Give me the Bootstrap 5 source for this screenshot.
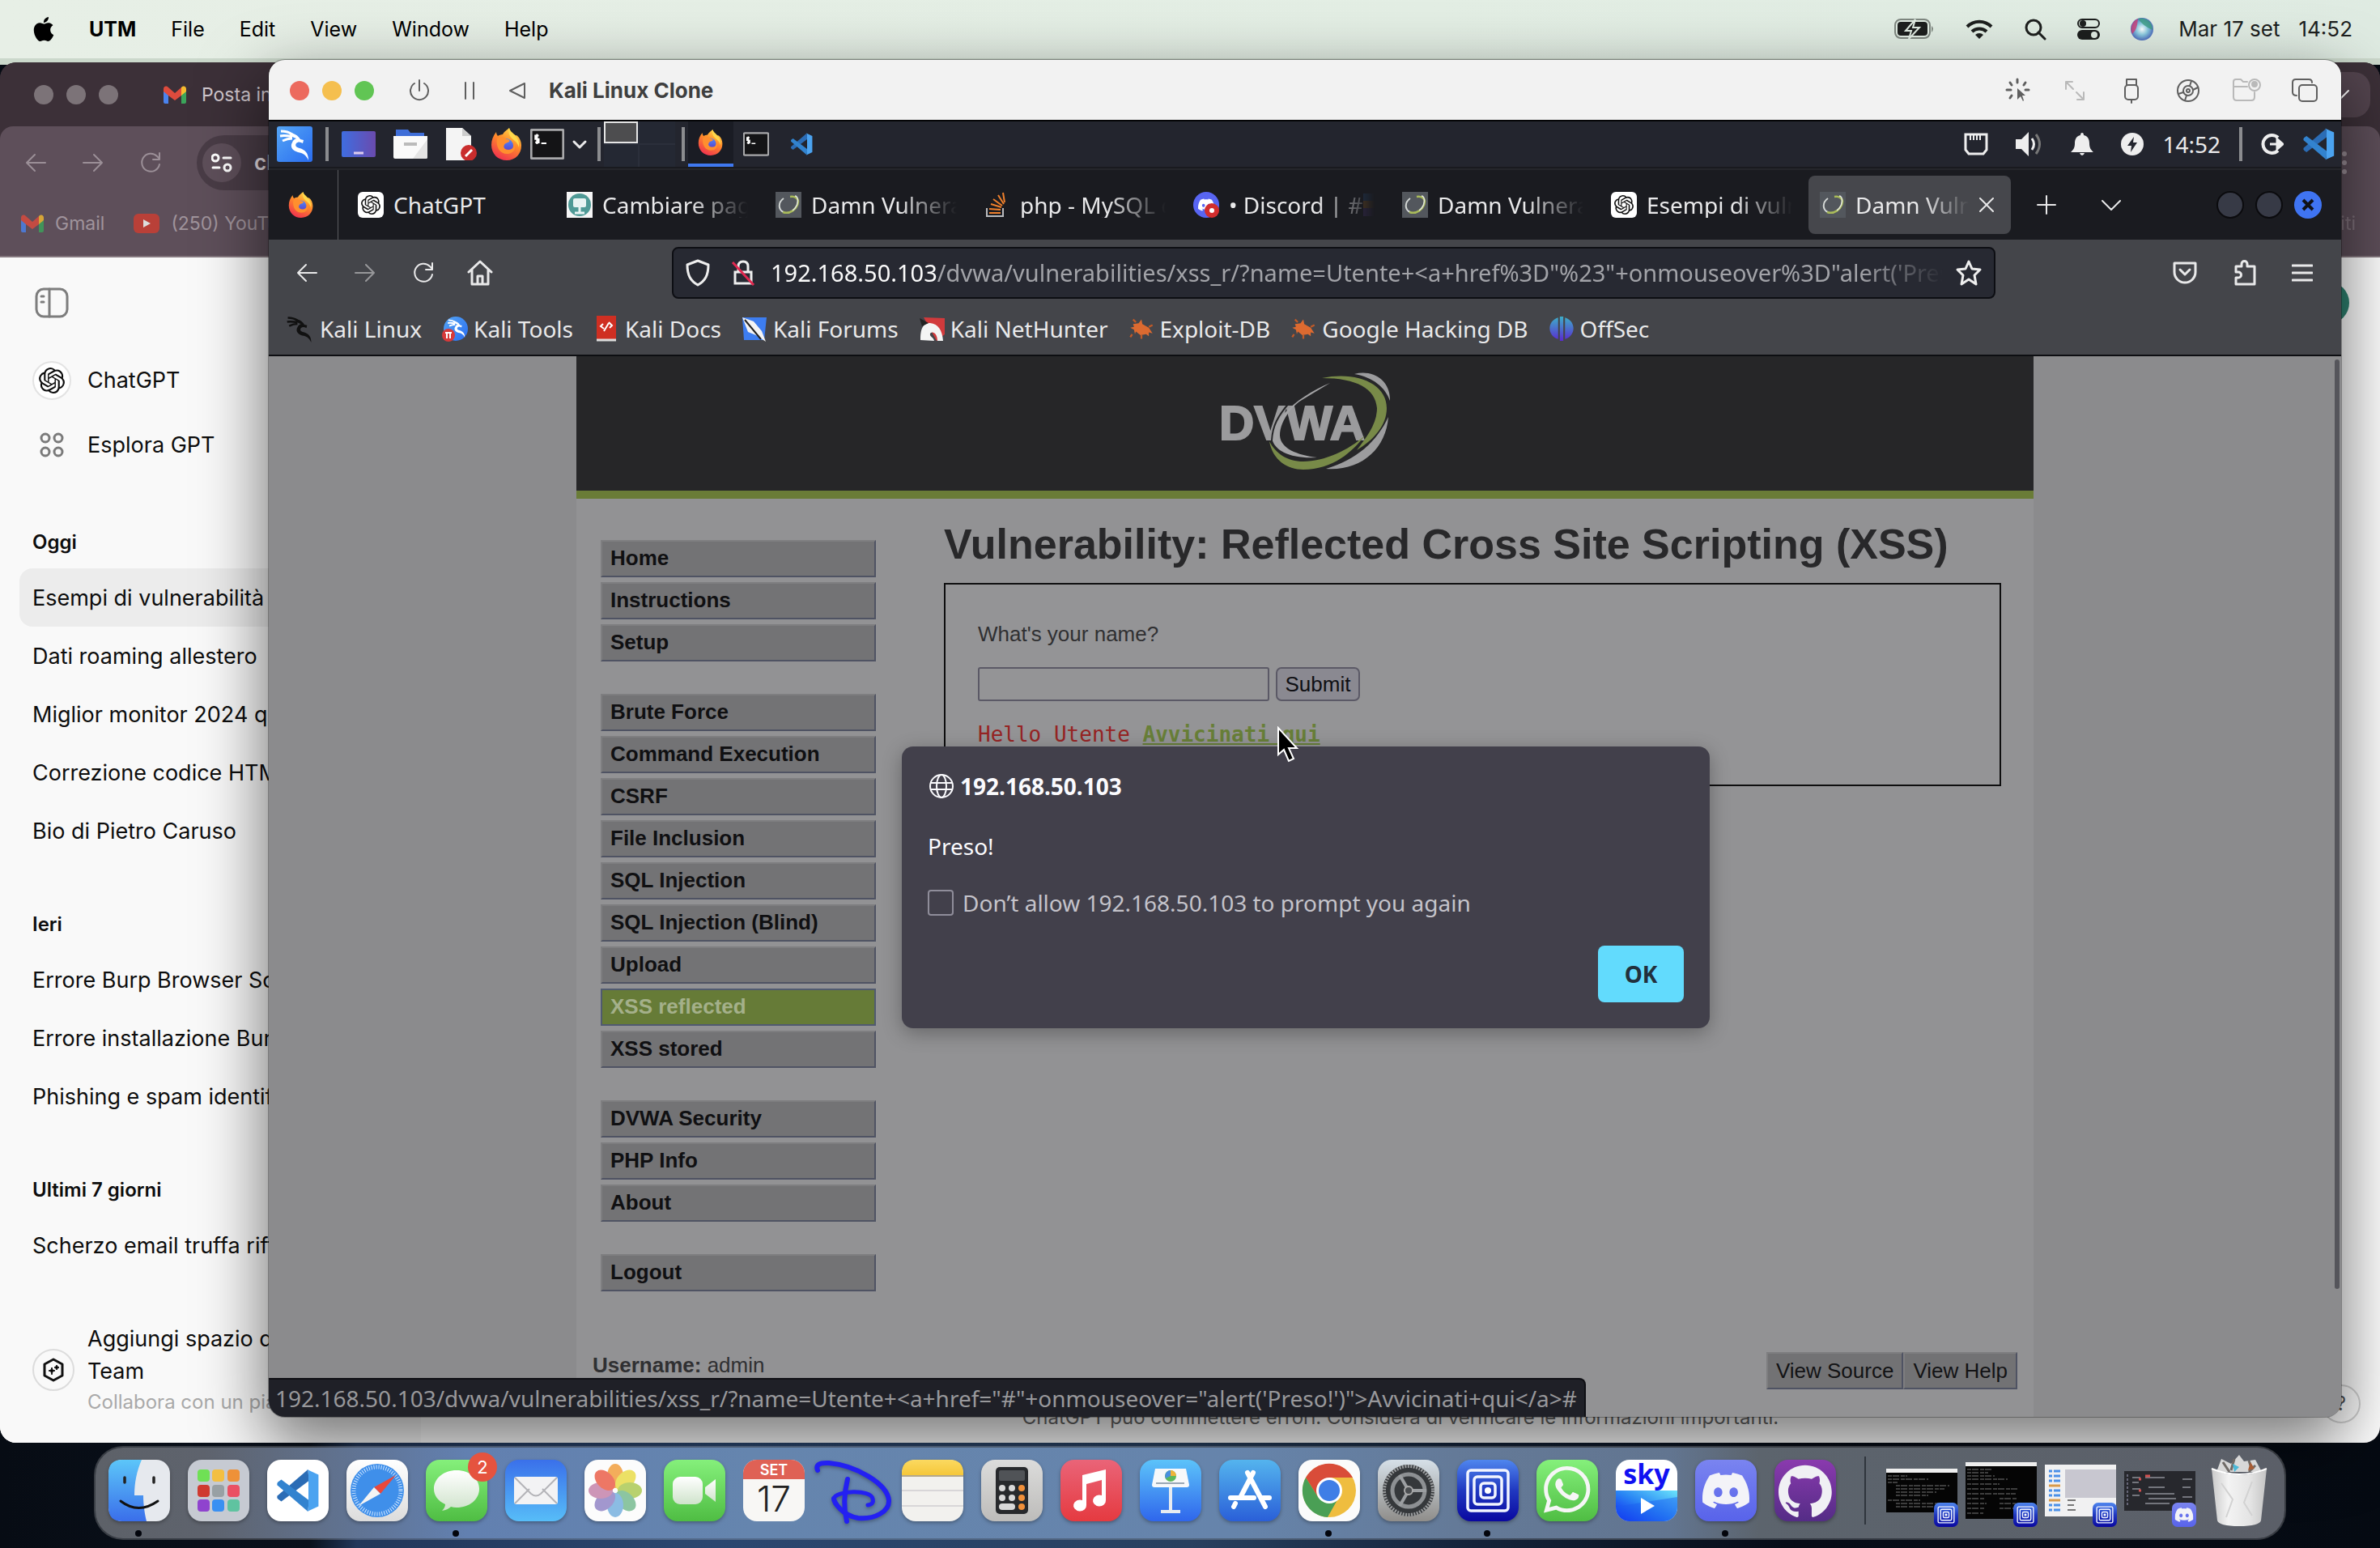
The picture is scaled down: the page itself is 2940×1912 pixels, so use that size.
<!DOCTYPE html>
<html lang="it">
<head>
<meta charset="utf-8">
<meta name="viewport" content="width=device-width, initial-scale=1">
<title>Kali Linux Clone</title>
<link href="https://cdn.jsdelivr.net/npm/bootstrap@5.3.0/dist/css/bootstrap.min.css" rel="stylesheet">
<style>
html,body{height:100%}
body{margin:0;overflow:hidden;font-family:Inter,"Open Sans",sans-serif;font-size:26px;line-height:32px;color:#0d0d0d;
 background:linear-gradient(90deg,#070c14 0,#0a111c 13%,#22375a 15%,#2b4770 30%,#28405f 50%,#14233a 62%,#070d18 75%,#050a12 100%)}
a{color:inherit;text-decoration:none}
button{border:0;background:none;padding:0;color:inherit;line-height:inherit}
svg{display:block;flex:none}
.sprite{position:absolute;width:0;height:0}
.ln{fill:none;stroke:currentColor;stroke-width:2;stroke-linecap:round;stroke-linejoin:round}
.thick{stroke-width:3}
.nowrap{white-space:nowrap}
.i28{width:28px;height:28px}.i32{width:32px;height:32px}.i40{width:40px;height:40px}.i24{width:24px;height:24px}
.dot24{width:24px;height:24px;border-radius:50%}

/* system bar */
.sysbar{height:72px;background:linear-gradient(90deg,#e7efe6,#e3eee4 60%,#dfebe2);color:#000;padding:0 34px 0 41px;font-size:25px}
.sysstrip{height:8px;background:#cbd8cb}
.sysbar nav{gap:43px}
.systray{gap:38px;color:#1d1f1e}
.sysend{gap:31px}
.sysclock{gap:23px;font-size:26px}

/* rear browser window */
.rear{position:absolute;top:77px;left:0;right:0;bottom:130px;border-radius:20px;overflow:hidden;background:#3c3038}
.rear-tabs{height:79px;background:#3c3038;padding:0 12px 0 42px;color:#cfc6cc;font-size:23px}
.rear-tabs .dot24{background:#7c7378}
.rear-tab{gap:19px;margin-left:56px}
.rear-search{width:72px;height:56px;border-radius:20px;background:#54454f}
.rear-bars{background:#5e4f5a;height:162px;border-bottom:2px solid #85787f;border-radius:16px 16px 0 0}
.rear-nav{height:90px;padding:0 40px 0 30px;color:#9b8f97}
.rear-nav .step{width:71px}
.rear-pill{height:68px;width:500px;border-radius:34px;background:#493c46;padding-left:7px;color:#e3dce1;font-weight:600}
.rear-pill span{width:48px;height:48px;border-radius:50%;background:#5e4f5a;color:#fff}
.rear-marks{height:60px;padding:0 30px 0 26px;gap:36px;color:#a0949c;font-size:23px}
.rear-marks a{display:flex;align-items:center;gap:14px;white-space:nowrap}
.rear-page{background:#fff}
.side{width:520px;background:#f9f9f9;color:#0d0d0d}
.side-top{height:112px;padding-left:43px;color:#7d7d7d}
.side-app{height:80px;padding-left:40px;gap:20px;font-size:27px}
.gpt-ring{width:48px;height:48px;border:2px solid #e3e3e3;border-radius:50%;background:#fff}
.side h2{font-size:24px;font-weight:600;line-height:56px;margin:52px 0 4px 40px}
.side-item{height:72px;margin:0 24px;padding:0 16px;border-radius:16px;line-height:73px;font-size:27px;overflow:hidden}
.side-item.current{background:#ececec}
.side-team{padding:0 0 32px 40px;gap:16px;font-size:27px;line-height:40px}
.side-team small{display:block;font-size:24px;line-height:36px;color:#a9a9a9}
.team-ring{width:52px;height:52px;border:2px solid #dcdcdc;border-radius:50%}
.rear-note{font-size:24px;line-height:30px;color:#676767;padding-bottom:16px}
.rear-help{position:absolute;right:24px;bottom:24px;width:48px;height:48px;border:2px solid #d4d4d4;border-radius:50%;font-size:24px;color:#555}
.rear-face{position:absolute;right:38px;top:30px;width:52px;height:52px;border-radius:50%;background:#2f8472}

/* virtual machine window */
.vm{position:absolute;top:74px;left:332px;right:48px;bottom:162px;border-radius:20px;overflow:hidden;background:#8b8b8d;
 box-shadow:0 0 0 1px rgba(0,0,0,.3),0 30px 80px 6px rgba(0,0,0,.52)}
.vm-title{height:76px;background:#f2f2f2;border-bottom:2px solid #050507;padding:2px 29px 0 26px;color:#5f5f5f}
.vm-title h1{font-size:26px;font-weight:700;margin:0;color:#3f3f3f;line-height:32px}
.vm-run{gap:41px;margin:0 28px 0 42px}
.vm-tools{gap:38px}
.linux{font-family:"Noto Sans","Open Sans",sans-serif;font-size:28px;color:#e9e9ea}
.panelbar{height:58px;background:#23252e;padding:0 8px 0 10px;border-bottom:2px solid #191a1f}
.psep{width:4px;height:42px;background:#8b8c8f;flex:none}
.spaces{width:88px;height:56px;background:#2b2f3b;display:grid;grid-template-columns:42px 1fr;grid-template-rows:27px 1fr;gap:2px}
.spaces i{background:#242833}
.spaces i:first-child{background:#4d4d4f;border:2px solid #e5e5e5}
.task{width:56px;height:56px}
.task.on{background:#1a1c24;border-bottom:4px solid #3f78f0}
.tabrow{height:88px;background:#1a1b20;border-top:2px solid #25262b}
.pinned{width:86px;border-right:1px solid #5a5b5f}
.tabs-list{padding-left:10px}
.ftab{width:258px;height:72px;padding:0 20px 0 14px;gap:12px;border-radius:8px;overflow:hidden;flex:none}
.ftab span{overflow:hidden;white-space:nowrap;flex:1;-webkit-mask-image:linear-gradient(90deg,#000 60%,transparent);mask-image:linear-gradient(90deg,#000 60%,transparent)}
.ftab.full span{-webkit-mask-image:none;mask-image:none}
.ftab.on{background:#46474c;width:250px}
.wbtn{width:34px;height:34px;border-radius:50%;background:#373a46;border:2px solid #0b0b0e}
.wbtn.x{background:#3f74f2;border-color:#3f74f2;color:#101218}
.navrow{height:82px;background:#44454a;padding:0 35px 0 29px}
.navrow .nb{width:72px}
.urlgap{width:181px}
.urlbox{width:1635px;height:64px;background:#272932;border:2px solid #0d0e13;border-radius:8px;padding:0 14px;color:#a2a3a8;font-size:29px}
.urltext{flex:1;overflow:hidden;white-space:nowrap;-webkit-mask-image:linear-gradient(90deg,#000 92%,transparent 99%);mask-image:linear-gradient(90deg,#000 92%,transparent 99%)}
.urltext b{font-weight:400;color:#fbfbfb}
.markrow{height:62px;background:#44454a;border-bottom:2px solid #0d0e12;padding:0 20px 4px;gap:25px}
.markrow a{display:flex;align-items:center;gap:7px;white-space:nowrap}
.view{height:1310px;position:relative;font-family:"Liberation Sans",Arial,sans-serif;font-size:26px;color:#303032;background:#8b8b8d}
.dv{width:1800px;max-width:100%;background:#929294}
.dv-head{height:176px;background:#262628;border-bottom:10px solid #6a7c37;padding-top:20px}
.dv-menu{width:340px;margin:51px 0 0 30px}
.dv-menu ul{list-style:none;padding:0;margin:0 0 40px}
.dv-menu a{display:block;height:46px;line-height:40px;margin-bottom:6px;padding-left:10px;font-weight:700;color:#101012;background:#737375;border:2px solid;border-color:#7e7e80 #4f5363 #4f5363 #7e7e80}
.dv-menu li:last-child a{margin-bottom:0}
.dv-menu a.sel{background:#667b37;color:#a4b08a;border-color:#505a70}
.dv-main{margin:26px 40px 0 84px;flex:1}
.dv-main h1{font-size:52px;font-weight:700;line-height:60px;margin:0 0 18px;color:#28282a;white-space:nowrap}
.dv-box{height:251px;border:2px solid #0e0e0f;padding:45px 40px 0;background:#949496}
.dv-box label{display:block;line-height:32px}
.dv-row{margin-top:25px}
.dv-input{width:360px;height:42px;border:2px solid #5b5966;border-radius:3px;background:#949496;outline:0}
.dv-submit{height:42px;width:104px;border:2px solid #5b5966;border-radius:7px;background:#8a8991;color:#101014;line-height:36px}
.dv-hello{font-family:"DejaVu Sans Mono",monospace;color:#962424;line-height:32px;margin:25px 0 0}
.dv-hello a{font-weight:700;color:#687f38;text-decoration:underline;text-decoration-thickness:2px;text-underline-offset:2px;text-decoration-skip-ink:none}
.dv-foot{padding:0 20px;margin-top:35px}
.dv-foot button{height:46px;padding:0 10px;background:#727274;color:#131315;border:2px solid;border-color:#7e7e80 #4f5363 #4f5363 #7e7e80;line-height:42px}
.dialog{position:absolute;top:482px;left:50%;width:998px;margin-left:-498px;background:#42404b;border-radius:14px;padding:31px 32px 32px;color:#fbfbfe;line-height:36px;box-shadow:0 6px 24px rgba(0,0,0,.3)}
.dialog .say{margin:38px 0 34px}
.dialog .ask{gap:11px;margin-bottom:35px;color:#c4c3ca}
.dialog .tick{appearance:none;width:32px;height:32px;border:2px solid #8f8d9a;border-radius:4px;background:none;margin:0}
.dialog .okb{width:106px;height:70px;border-radius:8px;background:#62dbfd;color:#22303c;font-weight:700}
.hoverurl{position:absolute;left:0;bottom:0;height:48px;line-height:42px;padding:2px 9px 0 8px;background:#1f2027;color:#98989b;border:solid #0f0f14;border-width:2px 2px 0 0;border-radius:0 8px 0 0;white-space:nowrap}
.pointer{position:absolute;left:1245px;top:457px}
.scrollbit{position:absolute;right:2px;top:4px;width:6px;height:1148px;border-radius:3px;background:#55555b}

/* dock */
.dock{position:absolute;bottom:10px;left:50%;transform:translateX(-50%);height:116px;padding:0 20px 6px 16px;border:2px solid rgba(255,255,255,.2);border-radius:36px;gap:22px;
 background:linear-gradient(90deg,#5d6168 0,#5e636d 5%,#6280b0 17%,#6585ae 30%,#6684ab 52%,#647a98 62%,#627590 72%,#5c646d 76%,#5b5f68 100%);background-clip:padding-box}
.app{position:relative;width:76px;height:76px;flex:none}
.app>svg{width:76px;height:76px;filter:drop-shadow(0 2px 2px rgba(0,0,0,.3))}
.app.run::after{content:"";position:absolute;left:33px;top:87px;width:8px;height:8px;border-radius:50%;background:#03050c}
.app .bubble{position:absolute;right:-12px;top:-9px;width:36px;height:36px;border-radius:50%;background:#e5533f;color:#fff;font-size:22px;line-height:36px;text-align:center}
.cal{border-radius:17px;overflow:hidden;background:#f8f7f5;text-align:center}
.cal b{display:block;height:24px;line-height:25px;font-size:18px;font-weight:600;color:#fff;background:#df6155}
.cal i{display:block;font-style:normal;font-size:44px;font-weight:300;line-height:48px;color:#222}
.skyapp{border-radius:17px;overflow:hidden;background:#fff;text-align:center}
.skyapp b{display:block;height:38px;font:700 34px/34px "Noto Sans",sans-serif;color:#1010f2}
.app.skyapp>svg{height:38px;filter:none}
.dsep{width:2px;height:84px;background:#2f353d;margin:0 3px 0 13px}
.mini{position:relative;width:88px;height:76px;margin-right:-12px}
.mini svg.pic{width:88px;height:76px}
.mini .tag{position:absolute;right:-1px;bottom:-7px;width:30px;height:30px}
</style>
<script src="https://cdn.jsdelivr.net/npm/bootstrap@5.3.0/dist/js/bootstrap.bundle.min.js"></script>
</head>
<body>
<svg class="sprite" aria-hidden="true">
<defs>
<linearGradient id="gFire" x1=".8" y1="0" x2=".3" y2="1"><stop offset="0" stop-color="#ffe14d"/><stop offset=".45" stop-color="#ff8a2a"/><stop offset="1" stop-color="#f0304f"/></linearGradient>
<linearGradient id="gCore" x1="0" y1="0" x2="0" y2="1"><stop offset="0" stop-color="#4e8dfb"/><stop offset="1" stop-color="#5a37c4"/></linearGradient>
<linearGradient id="gKali" x1="0" y1="0" x2="1" y2="1"><stop offset="0" stop-color="#54a5f5"/><stop offset="1" stop-color="#2a6df0"/></linearGradient>
<linearGradient id="gDesk" x1="0" y1="0" x2="1" y2="0"><stop offset="0" stop-color="#3f6de0"/><stop offset="1" stop-color="#6a4bae"/></linearGradient>
<linearGradient id="gGreen" x1="0" y1="0" x2="0" y2="1"><stop offset="0" stop-color="#85f07b"/><stop offset="1" stop-color="#4fbd43"/></linearGradient>
<linearGradient id="gBlueA" x1="0" y1="0" x2="0" y2="1"><stop offset="0" stop-color="#3a70ea"/><stop offset="1" stop-color="#57bdf8"/></linearGradient>
<linearGradient id="gBlueB" x1="0" y1="0" x2="0" y2="1"><stop offset="0" stop-color="#5cc3fa"/><stop offset="1" stop-color="#2f66ec"/></linearGradient>
<linearGradient id="gStore" x1="0" y1="0" x2="0" y2="1"><stop offset="0" stop-color="#54b4ee"/><stop offset="1" stop-color="#2a5fd8"/></linearGradient>
<linearGradient id="gRed" x1="0" y1="0" x2="0" y2="1"><stop offset="0" stop-color="#ea6478"/><stop offset="1" stop-color="#e53a40"/></linearGradient>
<linearGradient id="gUtm" x1="0" y1="0" x2="0" y2="1"><stop offset="0" stop-color="#4f86ee"/><stop offset=".5" stop-color="#2038c0"/><stop offset="1" stop-color="#0a08a0"/></linearGradient>
<linearGradient id="gGray" x1="0" y1="0" x2="0" y2="1"><stop offset="0" stop-color="#d6e0e8"/><stop offset="1" stop-color="#8f8d8a"/></linearGradient>
<linearGradient id="gWhite" x1="0" y1="0" x2="0" y2="1"><stop offset="0" stop-color="#fff"/><stop offset="1" stop-color="#dcdcdc"/></linearGradient>
<linearGradient id="gPale" x1="0" y1="0" x2="0" y2="1"><stop offset="0" stop-color="#fff"/><stop offset="1" stop-color="#cfe3cb"/></linearGradient>
<linearGradient id="gFind" x1="0" y1="0" x2="0" y2="1"><stop offset="0" stop-color="#5cc6f9"/><stop offset="1" stop-color="#3a6eea"/></linearGradient>
<linearGradient id="gDis" x1="0" y1="0" x2="0" y2="1"><stop offset="0" stop-color="#7a84f0"/><stop offset="1" stop-color="#5863ea"/></linearGradient>
<linearGradient id="gHub" x1="0" y1="0" x2="0" y2="1"><stop offset="0" stop-color="#8a3aae"/><stop offset="1" stop-color="#542c86"/></linearGradient>
<linearGradient id="gNote" x1="0" y1="0" x2="0" y2="1"><stop offset="0" stop-color="#fbd960"/><stop offset="1" stop-color="#f5c73a"/></linearGradient>
<linearGradient id="gOff" x1="0" y1="0" x2="0" y2="1"><stop offset="0" stop-color="#3dafc9"/><stop offset="1" stop-color="#5a2ad0"/></linearGradient>
<linearGradient id="gCalc" x1="0" y1="0" x2="0" y2="1"><stop offset="0" stop-color="#dcdcdb"/><stop offset="1" stop-color="#bdbcba"/></linearGradient>
<linearGradient id="gSky" x1="0" y1="1" x2="1" y2="0"><stop offset="0" stop-color="#0b1df0"/><stop offset=".5" stop-color="#2a86f4"/><stop offset="1" stop-color="#6ae4fb"/></linearGradient>
<linearGradient id="gCan" x1="0" y1="0" x2="1" y2="0"><stop offset="0" stop-color="#c9c9c9"/><stop offset=".3" stop-color="#f3f3f3"/><stop offset=".7" stop-color="#e4e4e4"/><stop offset="1" stop-color="#c4c4c4"/></linearGradient>
<radialGradient id="gSiri"><stop offset="0" stop-color="#fff"/><stop offset=".5" stop-color="#8ccbe0"/><stop offset="1" stop-color="#4f6fbe"/></radialGradient>
</defs>
<symbol id="firefox" viewBox="0 0 40 40"><path d="M20 40C9 40 1 32 1 21c0-6 2-11 6-16 0 2 1 4 2 5 1-1 4-2 6-2 2-4 5-5 8-8 1 4 3 5 6 8 2 1 3 2 3 1 4 3 6 8 6 13C38 32 31 40 20 40z" fill="url(#gFire)"/><circle cx="19" cy="22" r="9" fill="url(#gCore)"/><path d="M8 13c4-3 9-2 12 1 3 0 4 2 3 3-2 2-5 1-6 4-2 3 1 6 5 6 5 0 8-4 7-9 3 5 1 13-7 14C12 33 6 24 8 13z" fill="#ff8f2e"/><path d="M23 0c1 4 3 5 6 8 4 4 7 9 6 16-2-8-8-9-11-14-2-4-2-7-1-10z" fill="#ffd84a"/></symbol>
<symbol id="gpt" viewBox="0 0 24 24"><path fill="currentColor" d="M22.2819 9.8211a5.9847 5.9847 0 0 0-.5157-4.9108 6.0462 6.0462 0 0 0-6.5098-2.9A6.0651 6.0651 0 0 0 4.9807 4.1818a5.9847 5.9847 0 0 0-3.9977 2.9 6.0462 6.0462 0 0 0 .7427 7.0966 5.98 5.98 0 0 0 .511 4.9107 6.051 6.051 0 0 0 6.5146 2.9001A5.9847 5.9847 0 0 0 13.2599 24a6.0557 6.0557 0 0 0 5.7718-4.2058 5.9894 5.9894 0 0 0 3.9977-2.9001 6.0557 6.0557 0 0 0-.7475-7.0729zm-9.022 12.6081a4.4755 4.4755 0 0 1-2.8764-1.0408l.1419-.0804 4.7783-2.7582a.7948.7948 0 0 0 .3927-.6813v-6.7369l2.02 1.1686a.071.071 0 0 1 .038.052v5.5826a4.504 4.504 0 0 1-4.4945 4.4944zm-9.6607-4.1254a4.4708 4.4708 0 0 1-.5346-3.0137l.142.0852 4.783 2.7582a.7712.7712 0 0 0 .7806 0l5.8428-3.3685v2.3324a.0804.0804 0 0 1-.0332.0615L9.74 19.9502a4.4992 4.4992 0 0 1-6.1408-1.6464zM2.3408 7.8956a4.485 4.485 0 0 1 2.3655-1.9728V11.6a.7664.7664 0 0 0 .3879.6765l5.8144 3.3543-2.0201 1.1685a.0757.0757 0 0 1-.071 0l-4.8303-2.7865A4.504 4.504 0 0 1 2.3408 7.872zm16.5963 3.8558L13.1038 8.364 15.1192 7.2a.0757.0757 0 0 1 .071 0l4.8303 2.7913a4.4944 4.4944 0 0 1-.6765 8.1042v-5.6772a.79.79 0 0 0-.407-.667zm2.0107-3.0231l-.142-.0852-4.7735-2.7818a.7759.7759 0 0 0-.7854 0L9.409 9.2297V6.8974a.0662.0662 0 0 1 .0284-.0615l4.8303-2.7866a4.4992 4.4992 0 0 1 6.6802 4.66zM8.3065 12.863l-2.02-1.1638a.0804.0804 0 0 1-.038-.0567V6.0742a4.4992 4.4992 0 0 1 7.3757-3.4537l-.142.0805L8.704 5.459a.7948.7948 0 0 0-.3927.6813zm1.0976-2.3654l2.602-1.4998 2.6069 1.4998v2.9994l-2.5974 1.4997-2.6067-1.4997Z"/></symbol>
<symbol id="gptbox" viewBox="0 0 32 32"><rect width="32" height="32" rx="6" fill="#fff"/><use href="#gpt" x="4" y="4" width="24" height="24" color="#111"/></symbol>
<symbol id="dvwa" viewBox="0 0 32 32"><rect width="32" height="32" fill="#53575d"/><path d="M10 25C3 22 3 13 10 8" fill="none" stroke="#d4d8d6" stroke-width="2"/><path d="M9 25c8 3 18-3 19-13 0-4-4-7-10-6" fill="none" stroke="#a9bb5a" stroke-width="2.5"/><path d="M24 5c5 0 5 12-3 18" fill="none" stroke="#e3e6e0" stroke-width="1.5"/></symbol>
<symbol id="vscode" viewBox="0 0 100 100"><path d="M74 2 4 62q-2 5 2 8l7 5L76 28z" fill="#2b6cb5"/><path d="M74 98 4 38q-2-5 2-8l7-5L76 72z" fill="#3283cf"/><path d="M70 1l28 13v72L70 99q5-2 5-8V9q0-6-5-8z" fill="#4ba3f0"/></symbol>
<symbol id="term" viewBox="0 0 40 36"><rect x="1" y="1" width="38" height="34" rx="2" fill="#141416" stroke="#a8a8aa" stroke-width="3"/><path d="M10 8H6v4h4v4H6M8 6v12M13 17h6" fill="none" stroke="#fff" stroke-width="2"/></symbol>
<symbol id="dragon" viewBox="0 0 40 40"><path d="M3 4c6 0 10 1 14 4M2 10c6-1 11 0 15 1M5 16c4-2 8-3 12-3" fill="none" stroke="currentColor" stroke-width="3"/><path d="M12 6c7 0 12 3 15 8l4 1-1 4c-3-2-6-2-8 0-2 3 0 5 4 6 7 2 11 6 11 15-3-7-7-9-13-10-7-2-10-7-7-12 1-3 3-4 5-5-4-1-7-3-10-7z" fill="currentColor"/></symbol>
<symbol id="gmail" viewBox="0 0 28 22"><path d="M0 4v16q0 2 2 2h4V9z" fill="#4a83ee"/><path d="M28 4v16q0 2-2 2h-4V9z" fill="#3ba55a"/><path d="M22 3v9l6-5V4c0-3-3-5-6-2z" fill="#f5bb2f"/><path d="M6 12 0 7V4c0-3 3-5 6-2l8 7 8-7v10l-8 6z" fill="#de4b3d"/></symbol>
<symbol id="discord" viewBox="0 0 24 24"><path fill="currentColor" d="M20.317 4.3698a19.7913 19.7913 0 00-4.8851-1.5152.0741.0741 0 00-.0785.0371c-.211.3753-.4447.8648-.6083 1.2495-1.8447-.2762-3.68-.2762-5.4868 0-.1636-.3933-.4058-.8742-.6177-1.2495a.077.077 0 00-.0785-.037 19.7363 19.7363 0 00-4.8852 1.515.0699.0699 0 00-.0321.0277C.5334 9.0458-.319 13.5799.0992 18.0578a.0824.0824 0 00.0312.0561c2.0528 1.5076 4.0413 2.4228 5.9929 3.0294a.0777.0777 0 00.0842-.0276c.4616-.6304.8731-1.2952 1.226-1.9942a.076.076 0 00-.0416-.1057c-.6528-.2476-1.2743-.5495-1.8722-.8923a.077.077 0 01-.0076-.1277c.1258-.0943.2517-.1923.3718-.2914a.0743.0743 0 01.0776-.0105c3.9278 1.7933 8.18 1.7933 12.0614 0a.0739.0739 0 01.0785.0095c.1202.099.246.1981.3728.2924a.077.077 0 01-.0066.1276 12.2986 12.2986 0 01-1.873.8914.0766.0766 0 00-.0407.1067c.3604.698.7719 1.3628 1.225 1.9932a.076.076 0 00.0842.0286c1.961-.6067 3.9495-1.5219 6.0023-3.0294a.077.077 0 00.0313-.0552c.5004-5.177-.8382-9.6739-3.5485-13.6604a.061.061 0 00-.0312-.0286zM8.02 15.3312c-1.1825 0-2.1569-1.0857-2.1569-2.419 0-1.3332.9555-2.4189 2.157-2.4189 1.2108 0 2.1757 1.0952 2.1568 2.419 0 1.3332-.9555 2.4189-2.1569 2.4189zm7.9748 0c-1.1825 0-2.1569-1.0857-2.1569-2.419 0-1.3332.9554-2.4189 2.1569-2.4189 1.2108 0 2.1757 1.0952 2.1568 2.419 0 1.3332-.946 2.4189-2.1568 2.4189Z"/></symbol>
<symbol id="utm" viewBox="0 0 76 76"><rect width="76" height="76" rx="17" fill="url(#gUtm)"/><g fill="none" stroke="#f2f5ff" stroke-width="3.5"><rect x="13" y="13" width="50" height="50" rx="4"/><rect x="21" y="21" width="34" height="34" rx="4"/><rect x="29" y="29" width="18" height="18" rx="4"/></g><circle cx="38" cy="38" r="4" fill="#fff"/></symbol>
<symbol id="discapp" viewBox="0 0 76 76"><rect width="76" height="76" rx="17" fill="url(#gDis)"/><use href="#discord" x="9" y="9" width="58" height="58" color="#f3f3f8"/></symbol>
<symbol id="bug" viewBox="0 0 28 28"><path d="M5 9l6-1 3-4 1 5 7 4 4 6-4-1 0 4-3-2-6 1-5-4-1 3-1-5-4-2 4-1z" fill="#dd6a30"/><path d="M8 7l-3-3M4 20l-2 3M14 21v4M22 12l4-2" stroke="#c05a28" stroke-width="2"/></symbol>
<symbol id="arrowL" viewBox="0 0 28 28"><path class="ln" d="M26 14H3M13 4 3 14l10 10"/></symbol>
<symbol id="arrowR" viewBox="0 0 28 28"><path class="ln" d="M2 14h23M15 4l10 10-10 10"/></symbol>
<symbol id="reload" viewBox="0 0 28 28"><path class="ln" d="M25 16a11 11 0 1 1-3-10l3 3M25 2v8h-8"/></symbol>
<symbol id="chev" viewBox="0 0 28 28"><path class="ln" d="M3 9l11 11L25 9"/></symbol>
</svg>

<header class="sysbar d-flex align-items-center justify-content-between">
 <nav class="d-flex align-items-center" aria-label="Menu">
  <svg width="26" height="30" viewBox="2 0 20 24"><path d="M12.152 6.896c-.948 0-2.415-1.078-3.96-1.04-2.04.027-3.91 1.183-4.961 3.014-2.117 3.675-.546 9.103 1.519 12.09 1.013 1.454 2.208 3.09 3.792 3.039 1.52-.065 2.09-.987 3.935-.987 1.831 0 2.35.987 3.96.948 1.637-.026 2.676-1.48 3.676-2.948 1.156-1.688 1.636-3.325 1.662-3.415-.039-.013-3.182-1.221-3.22-4.857-.026-3.04 2.48-4.494 2.597-4.559-1.429-2.09-3.623-2.324-4.39-2.376-2-.156-3.675 1.09-4.61 1.09zM15.53 3.83c.843-1.012 1.4-2.427 1.245-3.83-1.207.052-2.662.805-3.532 1.818-.78.896-1.454 2.338-1.273 3.714 1.338.104 2.715-.688 3.559-1.701"/></svg>
  <a href="#" class="fw-bold">UTM</a><a href="#">File</a><a href="#">Edit</a><a href="#">View</a><a href="#">Window</a><a href="#">Help</a>
 </nav>
 <div class="systray d-flex align-items-center">
  <svg width="50" height="26" viewBox="0 0 50 26"><rect x="1" y="1" width="43" height="23" rx="7" fill="none" stroke="#7f8780" stroke-width="2"/><rect x="4" y="4" width="37" height="17" rx="4" fill="#1d1f1e"/><path d="M46 9q4 3 0 8z" fill="#7f8780"/><path d="M26 1 14 15h7l-3 10 13-14h-8z" fill="#1d1f1e" stroke="#e1ece3" stroke-width="2"/></svg>
  <svg width="34" height="26" viewBox="0 0 34 26"><g fill="none" stroke="#1d1f1e" stroke-width="4"><path d="M2 10a21 21 0 0 1 30 0M8 16a13 13 0 0 1 18 0"/></g><path d="M17 25l-5-5a7 7 0 0 1 10 0z" fill="#1d1f1e"/></svg>
  <svg width="28" height="28" viewBox="0 0 28 28"><circle cx="12" cy="12" r="9" fill="none" stroke="#1d1f1e" stroke-width="3"/><path d="M18 18l8 8" stroke="#1d1f1e" stroke-width="3" stroke-linecap="round"/></svg>
  <svg width="28" height="28" viewBox="0 0 28 28"><rect x="1" y="2" width="26" height="10" rx="5" fill="none" stroke="#1d1f1e" stroke-width="2"/><circle cx="7" cy="7" r="4" fill="#1d1f1e"/><rect y="15" width="28" height="12" rx="6" fill="#1d1f1e"/><circle cx="21" cy="21" r="4" fill="#e1ece3"/></svg>
  <div class="sysend d-flex align-items-center">
   <svg width="28" height="28" viewBox="0 0 28 28"><circle cx="14" cy="14" r="14" fill="url(#gSiri)"/><path d="M2 20A14 14 0 0 1 9 1c-1 8-1 13-7 19z" fill="#cf3f78" opacity=".8"/><path d="M9 1a14 14 0 0 1 18 14C20 12 14 8 9 1z" fill="#3f9d82" opacity=".8"/></svg>
   <time class="sysclock d-flex nowrap"><span>Mar 17 set</span><span>14:52</span></time>
  </div>
 </div>
</header>
<div class="sysstrip"></div>

<section class="rear d-flex flex-column" aria-label="Chrome">
 <div class="rear-tabs d-flex align-items-center justify-content-between">
  <div class="d-flex align-items-center">
   <div class="d-flex gap-3"><i class="dot24"></i><i class="dot24"></i><i class="dot24"></i></div>
   <div class="rear-tab d-flex align-items-center nowrap"><svg width="28" height="22"><use href="#gmail"/></svg>Posta in arrivo</div>
  </div>
  <button class="rear-search d-flex align-items-center justify-content-end pe-4" aria-label="Cerca schede"><svg class="i28 text-white"><use href="#chev"/></svg></button>
 </div>
 <div class="rear-bars">
  <div class="rear-nav d-flex align-items-center">
   <div class="step"><svg class="i28"><use href="#arrowL"/></svg></div><div class="step"><svg class="i28"><use href="#arrowR"/></svg></div><div class="step"><svg class="i28"><use href="#reload"/></svg></div>
   <div class="rear-pill d-flex align-items-center gap-3"><span class="d-flex align-items-center justify-content-center"><svg width="26" height="24" viewBox="0 0 26 24" class="ln thick"><circle cx="5" cy="6" r="4"/><path d="M15 6h9M2 18h8"/><circle cx="20" cy="18" r="4"/></svg></span>chatgpt.com</div>
   <svg class="ms-auto" width="8" height="30" viewBox="0 0 8 30" fill="currentColor"><circle cx="4" cy="4" r="3"/><circle cx="4" cy="15" r="3"/><circle cx="4" cy="26" r="3"/></svg>
  </div>
  <div class="rear-marks d-flex align-items-center">
   <a href="#"><svg width="28" height="22" opacity=".8"><use href="#gmail"/></svg>Gmail</a>
   <a href="#"><svg width="32" height="24" viewBox="0 0 32 24"><rect width="32" height="24" rx="6" fill="#b94038"/><path d="M12 7v10l9-5z" fill="#ddd"/></svg>(250) YouTube</a>
   <a href="#" class="ms-auto opacity-50">Tutti i preferiti</a>
  </div>
 </div>
 <div class="rear-page d-flex flex-grow-1 position-relative">
  <aside class="side d-flex flex-column nowrap">
   <div class="side-top d-flex align-items-center"><svg width="42" height="38" viewBox="0 0 42 38" class="ln thick"><rect x="2" y="2" width="38" height="34" rx="9"/><path d="M18 2v34M8 11h3M8 18h3"/></svg></div>
   <a href="#" class="side-app d-flex align-items-center"><span class="gpt-ring d-flex align-items-center justify-content-center"><svg class="i32"><use href="#gpt"/></svg></span>ChatGPT</a>
   <a href="#" class="side-app d-flex align-items-center"><svg width="48" height="32" viewBox="0 0 48 32" fill="none" stroke="#7a7a7a" stroke-width="3"><circle cx="16" cy="7" r="5"/><circle cx="32" cy="7" r="5"/><circle cx="16" cy="24" r="5"/><circle cx="32" cy="24" r="5"/></svg>Esplora GPT</a>
   <h2>Oggi</h2>
   <a href="#" class="side-item current">Esempi di vulnerabilità XSS</a><a href="#" class="side-item">Dati roaming allestero</a><a href="#" class="side-item">Miglior monitor 2024 qualità</a><a href="#" class="side-item">Correzione codice HTML</a><a href="#" class="side-item">Bio di Pietro Caruso</a>
   <h2>Ieri</h2>
   <a href="#" class="side-item">Errore Burp Browser Solved</a><a href="#" class="side-item">Errore installazione Burp</a><a href="#" class="side-item">Phishing e spam identificati</a>
   <h2>Ultimi 7 giorni</h2>
   <a href="#" class="side-item">Scherzo email truffa riffa</a>
   <div class="side-team d-flex align-items-center mt-auto"><span class="team-ring d-flex align-items-center justify-content-center"><svg width="28" height="30" viewBox="0 0 28 30"><path d="M14 2l11 6v14l-11 6-11-6V8z" fill="none" stroke="#111" stroke-width="3" stroke-linejoin="round"/><path d="M12 12l1 3 3 1-3 1-1 4-1-4-3-1 3-1zM18 9l1 2 2 1-2 1-1 2-1-2-2-1 2-1z" stroke="#111"/></svg></span><div>Aggiungi spazio di<br>Team<small>Collabora con un piano</small></div></div>
  </aside>
  <main class="flex-grow-1 d-flex align-items-end justify-content-center"><p class="rear-note mb-0">ChatGPT può commettere errori. Considera di verificare le informazioni importanti.</p></main>
  <i class="rear-face"></i><button class="rear-help">?</button>
 </div>
</section>

<section class="vm d-flex flex-column" aria-label="Kali Linux Clone">
 <div class="vm-title d-flex align-items-center justify-content-between">
  <div class="d-flex align-items-center">
   <div class="d-flex gap-3"><i class="dot24" style="background:#ec6a5e"></i><i class="dot24" style="background:#f5bf4f"></i><i class="dot24" style="background:#61c554"></i></div>
   <div class="vm-run d-flex align-items-center">
    <svg class="i28 ln" viewBox="0 0 28 28"><path d="M14 1v13M8 5a11 11 0 1 0 12 0"/></svg>
    <svg width="14" height="24" viewBox="0 0 14 24" class="ln"><path d="M2 2v20M12 2v20"/></svg>
    <svg width="22" height="24" viewBox="0 0 22 24" class="ln"><path d="M20 3v18L2 12z"/></svg>
   </div>
   <h1>Kali Linux Clone</h1>
  </div>
  <div class="vm-tools d-flex align-items-center">
   <svg class="i32 ln thick" viewBox="0 0 32 32"><path d="M15 2v4M6 6l2 3M25 6l-2 3M2 15h5M25 15h4M6 25l2-3"/><path d="M15 13v14l4-4 3 6 1-1-2-6h4z" fill="currentColor" stroke="none"/></svg>
   <svg class="i32 ln" viewBox="0 0 32 32" color="#b9b9b9"><path d="M5 14V5h8M5 5l9 9M27 18v9h-8M27 27l-9-9"/></svg>
   <svg class="i32 ln" viewBox="0 0 32 32"><rect x="8" y="9" width="16" height="18" rx="4"/><path d="M10 9V2h12v7M16 27v4"/></svg>
   <svg class="i32 ln" viewBox="0 0 32 32"><circle cx="16" cy="16" r="13"/><circle cx="16" cy="16" r="6"/><circle cx="16" cy="16" r="2"/><path d="M20 4l-2 6M28 12l-6 3M4 20l6-2M12 28l2-6"/></svg>
   <svg width="36" height="32" viewBox="0 0 36 32" class="ln" color="#b9b9b9"><path d="M28 18v6q0 4-4 4H6q-4 0-4-4V5q0-3 3-3h6l3 3h5M2 11h17"/><circle cx="28" cy="9" r="7"/><circle cx="28" cy="8" r="3" fill="currentColor"/></svg>
   <svg class="i32 ln" viewBox="0 0 32 32"><rect x="9" y="9" width="22" height="20" rx="4"/><path d="M6 22q-5 0-5-4V6q0-4 4-4h16q4 0 4 4"/></svg>
  </div>
 </div>
 <div class="linux">
  <div class="panelbar d-flex align-items-center justify-content-between">
   <div class="d-flex align-items-center">
    <svg width="44" height="44" viewBox="0 0 44 44"><rect width="44" height="44" rx="3" fill="url(#gKali)"/><use href="#dragon" x="2" y="2" width="40" height="40" color="#fff"/></svg>
    <i class="psep mx-3"></i>
    <div class="d-flex align-items-center" style="gap:22px">
     <svg width="42" height="32" viewBox="0 0 42 32"><rect width="42" height="32" rx="2" fill="url(#gDesk)"/><path d="M15 27h12" stroke="#dce" stroke-width="3"/></svg>
     <svg width="42" height="36" viewBox="0 0 42 36"><path d="M3 0h15l3 4h17v14H3z" fill="#3f6ed8"/><path d="M0 8h42v26q0 2-2 2H2q-2 0-2-2z" fill="#fafafa"/><path d="M42 12v22q0 2-2 2H24z" fill="#e4e4e4"/><path d="M13 18h16" stroke="#bbb" stroke-width="4"/></svg>
     <svg width="40" height="40" viewBox="0 0 40 40"><path d="M1 0h20l11 10v30H1z" fill="#f4f4f4"/><path d="M21 0l11 10H21z" fill="#ccc"/><circle cx="29" cy="31" r="10" fill="#c92d2d"/><path d="M25 35l8-8" stroke="#fff" stroke-width="3"/></svg>
    </div>
    <div class="d-flex align-items-center ms-3 pe-2" style="gap:9px">
     <svg class="i40"><use href="#firefox"/></svg><svg width="42" height="38"><use href="#term"/></svg><svg width="20" height="20" viewBox="0 0 20 20" class="ln thick"><path d="M3 7l7 7 7-7"/></svg>
    </div>
    <i class="psep mx-1"></i>
    <div class="spaces"><i></i><i></i><i></i><i></i></div>
    <i class="psep ms-2 me-1"></i>
    <div class="task on d-flex align-items-center justify-content-center"><svg class="i32"><use href="#firefox"/></svg></div>
    <div class="task d-flex align-items-center justify-content-center"><svg width="32" height="30"><use href="#term"/></svg></div>
    <div class="task d-flex align-items-center justify-content-center"><svg class="i28"><use href="#vscode"/></svg></div>
   </div>
   <div class="d-flex align-items-center" style="gap:34px">
    <svg width="30" height="28" viewBox="0 0 30 28"><path d="M2 2h26v19l-4 5H6l-4-5z" fill="none" stroke="#eee" stroke-width="3"/><path d="M8 3v6M12 3v6M16 3v6M20 3v6" stroke="#eee" stroke-width="2"/></svg>
    <svg width="34" height="30" viewBox="0 0 34 30"><path d="M0 9h7l9-9v30l-9-9H0z" fill="#eee"/><path d="M20 8q5 7 0 14" fill="none" stroke="#eee" stroke-width="3"/><path d="M25 3q9 12 0 24" fill="none" stroke="#777" stroke-width="3"/></svg>
    <svg class="i28" viewBox="0 0 28 28"><path d="M14 0q2 0 2 3c5 1 7 5 7 10 0 6 2 8 5 11H0c3-3 5-5 5-11 0-5 2-9 7-10q0-3 2-3zM11 25h6q-1 3-3 3t-3-3z" fill="#eee"/></svg>
    <div class="d-flex align-items-center" style="gap:23px"><svg class="i28" viewBox="0 0 28 28"><circle cx="14" cy="14" r="14" fill="#eee"/><path d="M16 5 8 16h5l-1 8 8-12h-5z" fill="#23252e"/></svg><time>14:52</time><i class="psep"></i><svg class="i28" viewBox="0 0 28 28"><path d="M21 6a11 11 0 1 0 0 16" fill="none" stroke="#eee" stroke-width="4"/><path d="M11 14h12M20 8l7 6-7 6z" stroke="#eee" stroke-width="3" fill="#eee"/></svg><svg class="i40"><use href="#vscode"/></svg></div>
   </div>
  </div>
  <div class="tabrow d-flex align-items-center justify-content-between pe-2">
   <div class="d-flex align-items-center align-self-stretch">
    <div class="pinned d-flex align-items-center align-self-stretch ps-4"><svg class="i32"><use href="#firefox"/></svg></div>
    <div class="tabs-list d-flex align-items-center">
    <a href="#" class="ftab full d-flex align-items-center"><svg class="i32"><use href="#gptbox"/></svg><span>ChatGPT</span></a>
    <a href="#" class="ftab d-flex align-items-center"><svg class="i32" viewBox="0 0 32 32"><rect width="32" height="32" fill="#f5f5f5"/><circle cx="16" cy="16" r="14" fill="#4f9a96"/><rect x="8" y="8" width="16" height="11" rx="2" fill="#e8f4f3"/><path d="M16 19v6M10 26h12" stroke="#e8f4f3" stroke-width="3"/></svg><span>Cambiare pagina</span></a>
    <a href="#" class="ftab d-flex align-items-center"><svg class="i32"><use href="#dvwa"/></svg><span>Damn Vulnerable</span></a>
    <a href="#" class="ftab d-flex align-items-center"><svg class="i32" viewBox="0 0 32 32"><path d="M3 20v10h20V20" fill="none" stroke="#b9bbbe" stroke-width="2"/><path d="M6 26h14M6 21l14 1M8 15l13 4M11 9l11 8M17 4l7 11M23 1l2 12" stroke="#f0802c" stroke-width="2"/></svg><span>php - MySQL query</span></a>
    <a href="#" class="ftab d-flex align-items-center"><svg class="i32" viewBox="0 0 32 32"><circle cx="16" cy="16" r="16" fill="#5865f2"/><use href="#discord" x="6" y="6" width="20" height="20" color="#fff"/><circle cx="23" cy="23" r="9" fill="#d22d2d"/><circle cx="23" cy="23" r="3" fill="#fff"/></svg><span class="d-flex align-items-center">• Discord | #<svg width="20" height="28" viewBox="0 0 20 28"><path d="M0 0h20v9H0z" fill="#2c5f9a"/><path d="M0 9h20v9H0z" fill="#c07a28"/><path d="M0 18h20v10H0z" fill="#5d3f98"/></svg></span></a>
    <a href="#" class="ftab d-flex align-items-center"><svg class="i32"><use href="#dvwa"/></svg><span>Damn Vulnerable</span></a>
    <a href="#" class="ftab d-flex align-items-center"><svg class="i32"><use href="#gptbox"/></svg><span>Esempi di vulnerabilità</span></a>
    <a href="#" class="ftab on d-flex align-items-center"><svg class="i32"><use href="#dvwa"/></svg><span>Damn Vulnerable</span><svg width="20" height="20" viewBox="0 0 20 20" class="ln"><path d="M2 2l16 16M18 2 2 18"/></svg></a>
    </div>
    <div class="d-flex align-items-center ps-4 ms-2" style="gap:54px"><svg class="i24 ln" viewBox="0 0 24 24"><path d="M12 1v22M1 12h22"/></svg><svg class="i28"><use href="#chev"/></svg></div>
   </div>
   <div class="d-flex pe-3" style="gap:14px"><button class="wbtn" aria-label="Riduci"></button><button class="wbtn" aria-label="Ingrandisci"></button><button class="wbtn x d-flex align-items-center justify-content-center" aria-label="Chiudi"><svg width="18" height="18" viewBox="0 0 18 18" stroke="currentColor" stroke-width="4"><path d="M3 3l12 12M15 3 3 15"/></svg></button></div>
  </div>
  <div class="navrow d-flex align-items-center justify-content-between">
   <div class="d-flex align-items-center">
    <div class="nb ps-1"><svg class="i28"><use href="#arrowL"/></svg></div><div class="nb ps-1 opacity-50"><svg class="i28"><use href="#arrowR"/></svg></div><div class="nb ps-1"><svg class="i28"><use href="#reload"/></svg></div>
    <div class="nb"><svg class="i32 ln thick" viewBox="0 0 32 32"><path d="M2 15 16 2l14 13M6 12v18h20V12M13 30V20h6v10"/></svg></div>
    <div class="urlgap"></div>
    <div class="urlbox d-flex align-items-center">
     <svg width="32" height="34" viewBox="0 0 32 34" class="ln thick" color="#eee"><path d="M16 2l13 5c0 13-4 20-13 25C7 27 3 20 3 7z"/></svg>
     <svg class="ms-4 me-3" width="34" height="34" viewBox="0 0 34 34"><path d="M6 16h20v14H6zM10 15V9q0-6 6-6t6 6v6" fill="none" stroke="#eee" stroke-width="3"/><path d="M3 4l26 28" stroke="#e22850" stroke-width="3"/></svg>
     <div class="urltext"><b>192.168.50.103</b>/dvwa/vulnerabilities/xss_r/?name=Utente+&lt;a+href%3D"%23"+onmouseover%3D"alert('Preso!')"&gt;Avvicinati</div>
     <svg width="34" height="34" viewBox="0 0 34 34" class="ln thick" color="#eee"><path d="M17 3l4 9 10 1-7 7 2 11-9-6-9 6 2-11-7-7 10-1z"/></svg>
    </div>
   </div>
   <div class="d-flex align-items-center" style="gap:42px">
    <svg class="i32 ln thick" viewBox="0 0 32 32"><path d="M3 4h26v11a13 13 0 0 1-26 0zM10 12l6 6 6-6"/></svg>
    <svg class="i32 ln thick" viewBox="0 0 32 32"><path d="M5 8h7V5a3 3 0 0 1 7 0v3h9v22H5v-8h3a3 3 0 0 0 0-7H5z"/></svg>
    <svg width="26" height="24" viewBox="0 0 26 24" class="ln thick"><path d="M1 3h24M1 12h24M1 21h24"/></svg>
   </div>
  </div>
  <nav class="markrow d-flex align-items-center">
   <a href="#"><svg width="36" height="34" color="#111"><use href="#dragon"/></svg>Kali Linux</a>
   <a href="#"><svg class="i32" viewBox="0 0 32 32"><circle cx="17" cy="16" r="15" fill="url(#gKali)"/><use href="#dragon" x="6" y="3" width="24" height="24" color="#fff"/><circle cx="8" cy="24" r="8" fill="#d73a3a"/><path d="M4 21h8M6 21v7M10 21v7" stroke="#fff" stroke-width="2"/></svg>Kali Tools</a>
   <a href="#"><svg class="i32" viewBox="0 0 32 32"><path d="M4 0h24v29H4z" fill="#cf2f22"/><path d="M4 30h24" stroke="#ddd" stroke-width="3"/><path d="M12 10l-3 3 4 3M19 8l4 4-3 3M13 19l6-10" stroke="#fff" stroke-width="2" fill="none"/></svg>Kali Docs</a>
   <a href="#"><svg class="i32" viewBox="0 0 32 32"><path d="M1 2h30l-3 28H3z" fill="#3d7df0"/><path d="M1 2l14 5 10 12 5 13-12-8L8 20z" fill="#f4f4f4"/><path d="M4 5l20 24" stroke="#222" stroke-width="2"/></svg>Kali Forums</a>
   <a href="#"><svg class="i32" viewBox="0 0 32 32"><path d="M6 2l26 1v20l-10 8z" fill="#d23a3c"/><path d="M2 30C2 18 4 9 14 9c10 1 15 9 16 22h-7c0-9-6-13-9-9-1 4 4 4 5 9z" fill="#f4f4f4"/><path d="M1 3l11 6-8 4z" fill="#222"/></svg>Kali NetHunter</a>
   <a href="#"><svg class="i32"><use href="#bug"/></svg>Exploit-DB</a>
   <a href="#"><svg class="i32"><use href="#bug"/></svg>Google Hacking DB</a>
   <a href="#"><svg class="i32" viewBox="0 0 28 30" fill="url(#gOff)"><path d="M10 2v25C-3 23-3 6 10 2zM12 1h4v28h-4zM18 2v25c13-4 13-21 0-25z"/></svg>OffSec</a>
  </nav>
 </div>
 <div class="view flex-grow-1">
  <div class="dv mx-auto h-100">
   <div class="dv-head d-flex justify-content-center">
    <svg width="212" height="124" viewBox="0 0 212 124">
     <text x="0" y="83" font-family="'Liberation Sans',sans-serif" font-weight="700" font-size="60" fill="#9b9b9d" stroke="#9b9b9d" stroke-width="2">DVWA</text>
     <path d="M137 13C100 28 65 58 65 80c2 18 26 27 56 25C96 102 76 94 75 78c0-14 9-30 24-42z" fill="#a4a4a6"/>
     <path d="M88 36C72 54 66 66 65 84" fill="none" stroke="#262628" stroke-width="2"/>
     <path d="M127 7C170-2 207 14 207 44c0 22-17 40-37 52 12-16 25-32 25-52C193 20 170 7 127 7zM62 85c4 23 22 35 42 35 36 0 61-22 76-42-20 18-50 32-76 32-20 0-34-10-42-25z" fill="#788a48"/>
     <path d="M167 2c23-6 45 8 44 33-6-17-21-29-44-33zM209 55c-3 40-34 67-77 64 38-11 63-34 77-64z" fill="#9c9c9e"/></svg>
   </div>
   <div class="d-flex align-items-start">
    <nav class="dv-menu">
     <ul><li><a href="#">Home</a></li><li><a href="#">Instructions</a></li><li><a href="#">Setup</a></li></ul>
     <ul><li><a href="#">Brute Force</a></li><li><a href="#">Command Execution</a></li><li><a href="#">CSRF</a></li><li><a href="#">File Inclusion</a></li><li><a href="#">SQL Injection</a></li><li><a href="#">SQL Injection (Blind)</a></li><li><a href="#">Upload</a></li><li><a href="#" class="sel">XSS reflected</a></li><li><a href="#">XSS stored</a></li></ul>
     <ul><li><a href="#">DVWA Security</a></li><li><a href="#">PHP Info</a></li><li><a href="#">About</a></li></ul>
     <ul><li><a href="#">Logout</a></li></ul>
    </nav>
    <div class="dv-main">
     <h1>Vulnerability: Reflected Cross Site Scripting (XSS)</h1>
     <form class="dv-box" onsubmit="return false">
      <label for="nm">What's your name?</label>
      <div class="dv-row d-flex gap-2"><input id="nm" class="dv-input" type="text"><button class="dv-submit">Submit</button></div>
      <p class="dv-hello">Hello Utente <a href="#">Avvicinati qui</a></p>
     </form>
    </div>
   </div>
   <div class="dv-foot d-flex justify-content-between align-items-start"><span><b>Username:</b> admin</span><div class="d-flex"><button>View Source</button><button>View Help</button></div></div>
  </div>
  <div class="dialog linux" role="dialog" aria-labelledby="dt">
   <div class="d-flex align-items-center gap-2"><svg class="i32 ln" viewBox="0 0 32 32"><circle cx="17" cy="16" r="14"/><ellipse cx="17" cy="16" rx="6" ry="14"/><path d="M4 12h26M4 20h26"/></svg><b id="dt">192.168.50.103</b></div>
   <div class="say">Preso!</div>
   <div class="ask d-flex align-items-center"><input type="checkbox" class="tick" id="np"><label for="np">Don’t allow 192.168.50.103 to prompt you again</label></div>
   <div class="d-flex justify-content-end"><button class="okb">OK</button></div>
  </div>
  <svg class="pointer" width="28" height="46" viewBox="0 0 28 46"><path d="M2 2v33l7-6 6 14 6-3-6-13h10z" fill="#000" stroke="#fff" stroke-width="2"/></svg>
  <i class="scrollbit"></i>
  <div class="hoverurl linux">192.168.50.103/dvwa/vulnerabilities/xss_r/?name=Utente+&lt;a+href="#"+onmouseover="alert('Preso!')"&gt;Avvicinati+qui&lt;/a&gt;#</div>
 </div>
</section>

<footer class="dock d-flex align-items-center" aria-label="Dock">
 <div class="app run"><svg viewBox="0 0 76 76"><rect width="76" height="76" rx="17" fill="#e6e9ee"/><path d="M17 0h24c-6 14-9 28-9 44h11c0 12 2 24 4 32H17Q0 76 0 59V17Q0 0 17 0z" fill="url(#gFind)"/><path d="M15 51q22 17 46 0" fill="none" stroke="#111" stroke-width="3" stroke-linecap="round"/><path d="M20 22v6M56 22v6" stroke="#222" stroke-width="3.5" stroke-linecap="round"/></svg></div>
 <div class="app"><svg viewBox="0 0 76 76"><rect width="76" height="76" rx="17" fill="#c6cad2"/><g><rect x="12" y="12" width="15" height="15" rx="4" fill="#6fe055"/><rect x="30" y="12" width="15" height="15" rx="4" fill="#f3bf42"/><rect x="49" y="12" width="15" height="15" rx="4" fill="#ee9138"/><rect x="12" y="31" width="15" height="15" rx="4" fill="#cf3a30"/><rect x="30" y="31" width="15" height="15" rx="4" fill="#98a0a4"/><rect x="49" y="31" width="15" height="15" rx="4" fill="#ea5063"/><rect x="12" y="49" width="15" height="15" rx="4" fill="#8f43ce"/><rect x="30" y="49" width="15" height="15" rx="4" fill="#3a90f2"/><rect x="49" y="49" width="15" height="15" rx="4" fill="#5fc3a0"/></g></svg></div>
 <div class="app"><svg viewBox="0 0 76 76"><rect width="76" height="76" rx="17" fill="#fff"/><use href="#vscode" x="10" y="11" width="55" height="54"/></svg></div>
 <div class="app"><svg viewBox="0 0 76 76"><rect width="76" height="76" rx="17" fill="url(#gWhite)"/><circle cx="38" cy="38" r="33" fill="#3f8fea"/><circle cx="38" cy="38" r="29" fill="none" stroke="#cfe6ff" stroke-width="5" stroke-dasharray="1 2"/><path d="M61 19 42 42l-8-8z" fill="#e9483c"/><path d="M15 57l19-23 8 8z" fill="#f4f4f4"/></svg></div>
 <div class="app run"><svg viewBox="0 0 76 76"><rect width="76" height="76" rx="17" fill="url(#gGreen)"/><path d="M38 13c16 0 28 10 28 23S54 59 38 59q-4 0-7-1-4 4-11 5 4-4 4-8C15 51 10 44 10 36c0-13 12-23 28-23z" fill="url(#gPale)"/></svg><span class="bubble">2</span></div>
 <div class="app"><svg viewBox="0 0 76 76"><rect width="76" height="76" rx="17" fill="url(#gBlueA)"/><rect x="11" y="21" width="54" height="34" rx="3" fill="#f3f3f4"/><path d="M12 54l18-18M64 54 46 36M12 22l20 20q6 5 12 0l20-20" fill="none" stroke="#b4b4b8" stroke-width="2"/></svg></div>
 <div class="app"><svg viewBox="0 0 76 76"><rect width="76" height="76" rx="17" fill="#fcfcfc"/><g opacity=".82"><ellipse cx="38" cy="20" rx="10" ry="15" fill="#f29c38"/><ellipse cx="38" cy="20" rx="10" ry="15" fill="#e9dc45" transform="rotate(45 38 38)"/><ellipse cx="38" cy="20" rx="10" ry="15" fill="#aac850" transform="rotate(90 38 38)"/><ellipse cx="38" cy="20" rx="10" ry="15" fill="#74b98e" transform="rotate(135 38 38)"/><ellipse cx="38" cy="20" rx="10" ry="15" fill="#73aede" transform="rotate(180 38 38)"/><ellipse cx="38" cy="20" rx="10" ry="15" fill="#8f82c4" transform="rotate(225 38 38)"/><ellipse cx="38" cy="20" rx="10" ry="15" fill="#c37fa8" transform="rotate(270 38 38)"/><ellipse cx="38" cy="20" rx="10" ry="15" fill="#ea5b45" transform="rotate(315 38 38)"/></g></svg></div>
 <div class="app"><svg viewBox="0 0 76 76"><rect width="76" height="76" rx="17" fill="url(#gGreen)"/><rect x="11" y="21" width="37" height="34" rx="9" fill="url(#gPale)"/><path d="M51 34l13-10v28L51 42z" fill="url(#gPale)"/></svg></div>
 <div class="app cal"><b>SET</b><i>17</i></div>
 <div class="app"><svg viewBox="0 0 76 76" style="overflow:visible"><g fill="none" stroke="#2320f2" stroke-linecap="round"><path d="M-6 13q-4-10 14-9c34 3 72 26 74 46 1 14-18 24-38 22-20-3-30-20-30-24" stroke-width="6"/><path d="M31 24c-4 16-5 36-1 52" stroke-width="6"/><path d="M14 48C16 38 60 36 62 48q2 7-6 8" stroke-width="5"/></g></svg></div>
 <div class="app"><svg viewBox="0 0 76 76"><rect width="76" height="76" rx="17" fill="#f2f1ee"/><path d="M17 0h42q17 0 17 17v2H0v-2Q0 0 17 0z" fill="url(#gNote)"/><path d="M0 20h76" stroke="#b3a88c" stroke-width="2"/><path d="M0 38h76M0 57h76" stroke="#d8d6d8" stroke-width="2"/></svg></div>
 <div class="app"><svg viewBox="0 0 76 76"><rect width="76" height="76" rx="17" fill="url(#gCalc)"/><rect x="18" y="9" width="40" height="58" rx="5" fill="#27292c"/><rect x="22" y="13" width="32" height="13" rx="2" fill="#505357"/><g fill="#d8d8d8"><circle cx="26" cy="35" r="4"/><circle cx="38" cy="35" r="4"/><circle cx="26" cy="47" r="4"/><circle cx="38" cy="47" r="4"/><rect x="22" y="54" width="20" height="8" rx="4"/></g><g fill="#f1903a"><circle cx="50" cy="35" r="4"/><circle cx="50" cy="47" r="4"/><circle cx="50" cy="58" r="4"/></g></svg></div>
 <div class="app"><svg viewBox="0 0 76 76"><rect width="76" height="76" rx="17" fill="url(#gRed)"/><path d="M27 19l29-7v38a8 7 0 1 1-5-6V25l-19 5v26a8 7 0 1 1-5-6z" fill="#fff"/></svg></div>
 <div class="app"><svg viewBox="0 0 76 76"><rect width="76" height="76" rx="17" fill="url(#gBlueB)"/><path d="M19 11h38l4 20q0 3-3 3H18q-3 0-3-3z" fill="#f7f8fa"/><path d="M20 29h35" stroke="#9aa7b5" stroke-width="2"/><circle cx="38" cy="20" r="7" fill="#5cb85c"/><path d="M38 20v-7a7 7 0 0 1 7 7z" fill="#f0b43a"/><path d="M38 20v-7a7 7 0 0 0-6 10z" fill="#4a8fe0"/><path d="M38 34v29M26 64h24" stroke="#e8ecf0" stroke-width="4"/></svg></div>
 <div class="app"><svg viewBox="0 0 76 76"><rect width="76" height="76" rx="17" fill="url(#gStore)"/><path d="M42 16 27 45M20 54l-2 4M35 16l22 42M14 47h29M53 47h9" stroke="#fff" stroke-width="6" stroke-linecap="round"/></svg></div>
 <div class="app run"><svg viewBox="0 0 76 76"><rect width="76" height="76" rx="17" fill="#fbfbfb"/><circle cx="38" cy="38" r="33" fill="#efbd3f"/><path d="M9 22a33 33 0 0 1 58 0H38L24 46z" fill="#d94c39"/><path d="M9 22a33 33 0 0 0 27 49l14-25H24z" fill="#4a9f55"/><circle cx="38" cy="38" r="16" fill="#fff"/><circle cx="38" cy="38" r="13" fill="#3f7ee6"/></svg></div>
 <div class="app"><svg viewBox="0 0 76 76"><rect width="76" height="76" rx="17" fill="url(#gGray)"/><circle cx="38" cy="38" r="32" fill="#35383b"/><circle cx="38" cy="38" r="30" fill="none" stroke="#9a9c9e" stroke-width="4" stroke-dasharray="2 1.5"/><circle cx="38" cy="38" r="20" fill="none" stroke="#8d9093" stroke-width="5"/><path d="M38 38h22M38 38 27 19M38 38 27 57" stroke="#9b9ea1" stroke-width="4"/><circle cx="38" cy="38" r="5" fill="#4a4d50" stroke="#aaa" stroke-width="2"/></svg></div>
 <div class="app run"><svg><use href="#utm"/></svg></div>
 <div class="app"><svg viewBox="0 0 76 76"><rect width="76" height="76" rx="17" fill="url(#gGreen)"/><g transform="translate(9 8) scale(3.6)" fill="#f6f6f6"><path d="M13.601 2.326A7.854 7.854 0 0 0 7.994 0C3.627 0 .068 3.558.064 7.926c0 1.399.366 2.76 1.057 3.965L0 16l4.204-1.102a7.933 7.933 0 0 0 3.79.965h.004c4.368 0 7.926-3.558 7.93-7.93A7.898 7.898 0 0 0 13.6 2.326zM7.994 14.521a6.573 6.573 0 0 1-3.356-.92l-.24-.144-2.494.654.666-2.433-.156-.251a6.56 6.56 0 0 1-1.007-3.505c0-3.626 2.957-6.584 6.591-6.584a6.56 6.56 0 0 1 4.66 1.931 6.557 6.557 0 0 1 1.928 4.66c-.004 3.639-2.961 6.592-6.592 6.592zm3.615-4.934c-.197-.099-1.17-.578-1.353-.646-.182-.065-.315-.099-.445.099-.133.197-.513.646-.627.775-.114.133-.232.148-.43.05-.197-.1-.836-.308-1.592-.985-.59-.525-.985-1.175-1.103-1.372-.114-.198-.011-.304.088-.403.087-.088.197-.232.296-.346.1-.114.133-.198.198-.33.065-.134.034-.248-.015-.347-.05-.099-.445-1.076-.612-1.47-.16-.389-.323-.335-.445-.34-.114-.007-.247-.007-.38-.007a.729.729 0 0 0-.529.247c-.182.198-.691.677-.691 1.654 0 .977.71 1.916.81 2.049.098.133 1.394 2.132 3.383 2.992.47.205.84.326 1.129.418.475.152.904.129 1.246.08.38-.058 1.171-.48 1.338-.943.164-.464.164-.86.114-.943-.049-.084-.182-.133-.38-.232z"/></g></svg></div>
 <div class="app skyapp"><b>sky</b><svg viewBox="0 0 76 38"><path d="M0 0h76v38H0z" fill="url(#gSky)"/><path d="M0 20 76 8v30H0z" fill="#1b5df0" opacity=".45"/><path d="M31 9v20l17-10z" fill="#fff"/></svg></div>
 <div class="app run"><svg><use href="#discapp"/></svg></div>
 <div class="app"><svg viewBox="0 0 76 76"><rect width="76" height="76" rx="17" fill="url(#gHub)"/><g transform="translate(5 6) scale(2.74)" fill="#f0f0f4"><path d="M12 .297c-6.63 0-12 5.373-12 12 0 5.303 3.438 9.8 8.205 11.385.6.113.82-.258.82-.577 0-.285-.01-1.04-.015-2.04-3.338.724-4.042-1.61-4.042-1.61C4.422 18.07 3.633 17.7 3.633 17.7c-1.087-.744.084-.729.084-.729 1.205.084 1.838 1.236 1.838 1.236 1.07 1.835 2.809 1.305 3.495.998.108-.776.417-1.305.76-1.605-2.665-.3-5.466-1.332-5.466-5.93 0-1.31.465-2.38 1.235-3.22-.135-.303-.54-1.523.105-3.176 0 0 1.005-.322 3.3 1.23.96-.267 1.98-.399 3-.405 1.02.006 2.04.138 3 .405 2.28-1.552 3.285-1.23 3.285-1.23.645 1.653.24 2.873.12 3.176.765.84 1.23 1.91 1.23 3.22 0 4.61-2.805 5.625-5.475 5.92.42.36.81 1.096.81 2.22 0 1.606-.015 2.896-.015 3.286 0 .315.21.69.825.57C20.565 22.092 24 17.592 24 12.297c0-6.627-5.373-12-12-12"/></g></svg></div>
 <i class="dsep"></i>
 <div class="mini"><svg class="pic" viewBox="0 0 88 76"><rect y="11" width="88" height="54" fill="#050505"/><rect y="11" width="88" height="5" fill="#eee"/><path d="M2 20h24M2 24h50M2 28h12M12 32h66M12 36h60M12 40h50M12 44h40M2 50h40M12 54h54M12 58h48" stroke="#777" stroke-dasharray="5 1 8 2"/></svg><svg class="tag"><use href="#utm"/></svg></div>
 <div class="mini"><svg class="pic" viewBox="0 0 88 76"><rect y="3" width="88" height="70" fill="#050505"/><rect y="3" width="88" height="5" fill="#eee"/><path d="M2 12h30M2 16h26M2 20h34M2 24h50M2 30h40M2 36h64M2 42h60M2 48h22M42 48h22M2 54h24M42 54h20M2 60h22M42 60h24M2 66h20" stroke="#777" stroke-dasharray="5 1 8 2"/></svg><svg class="tag"><use href="#utm"/></svg></div>
 <div class="mini"><svg class="pic" viewBox="0 0 88 76"><rect y="6" width="88" height="64" fill="#f1f1f2"/><rect x="25" y="12" width="63" height="35" fill="#c8c7d0"/><path d="M5 14h14M5 20h14M5 26h14M5 38h14M5 44h14M5 56h14M5 62h14" stroke="#4a90e8" stroke-width="3" stroke-dasharray="4 2 8"/><path d="M5 32h14M5 50h14" stroke="#d89a4a" stroke-width="3"/><path d="M28 50h10M28 56h8M28 62h10" stroke="#777" stroke-width="2"/></svg><svg class="tag"><use href="#utm"/></svg></div>
 <div class="mini"><svg class="pic" viewBox="0 0 88 76"><rect y="14" width="88" height="49" fill="#27282d"/><path d="M4 18v40" stroke="#667" stroke-width="2" stroke-dasharray="3 2"/><path d="M10 22h10M10 28h8M10 36h10M10 44h9M26 22h24M30 34h20M26 42h36M30 48h34M26 54h30M72 24h12M72 34h10M72 46h12" stroke="#73757c" stroke-width="2"/><path d="M18 24h3M18 38h3M26 20h6" stroke="#d05050" stroke-width="3"/></svg><svg class="tag"><use href="#discapp"/></svg></div>
 <svg class="ms-2" width="72" height="90" viewBox="0 0 72 90"><path d="M8 22 14 6l12 6L36 1l6 8 14-2 8 15z" fill="#d8d8d8"/><path d="M16 10l8 12M30 6l-4 14M48 8l4 12M56 14l-8 8" stroke="#6f6a66" stroke-width="3"/><path d="M28 12l8 4-6 6z" fill="#4ab8d8"/><path d="M50 10l5 8-8 2z" fill="#a85d34"/><path d="M2 18q34 16 68 0l-7 64q-2 7-27 7t-27-7z" fill="url(#gCan)"/><path d="M2 18q34 14 68 0" fill="none" stroke="#fff" stroke-width="2"/><path d="M14 36l14 20-8 22M52 34 42 60l10 16" stroke="#d2d2d2" stroke-width="2" fill="none"/></svg>
</footer>
</body>
</html>
